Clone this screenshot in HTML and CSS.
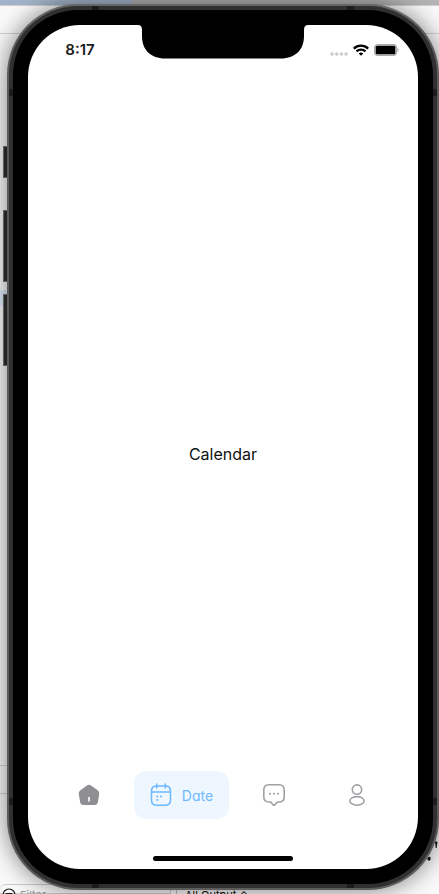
FILE: index.html
```
<!DOCTYPE html>
<html lang="en">
<head>
<meta charset="utf-8">
<meta name="viewport" content="width=device-width, initial-scale=1">
<title>Calendar</title>
<link rel="stylesheet" href="styles.css">
</head>
<body>
<div class="desktop">
  <div class="editor">
    <div class="editor-title"></div>
    <div class="editor-tabs"></div>
    <div class="editor-code"><div class="code-line"></div></div>
    <div class="editor-bar"></div>
    <div class="editor-console">
      <svg class="fragments" width="14" height="26" viewBox="0 0 14 26" aria-hidden="true"><path d="M10 2h2l-1 6M3 18l2-1v3H3z" fill="#111" stroke="#111"/></svg>
    </div>
    <div class="editor-footer">
      <div class="footer-filter">
        <svg width="14" height="14" viewBox="0 0 14 14" fill="none" stroke="#222" stroke-width="1.200" aria-hidden="true"><circle cx="7" cy="7" r="6"/><path d="M3.500 5.500h7M5 8.500h4"/></svg>
        <span>Filter</span>
      </div>
      <div class="footer-output">All Output ⌃</div>
    </div>
  </div>

  <div class="phone">
    <div class="side-buttons"><i class="mute"></i><i class="volume"></i><i class="volume"></i></div>
    <div class="frame">
      <div class="bezel">
        <div class="screen">
          <header class="status">
            <time class="clock">8:17</time>
            <svg class="notch" viewBox="0 0 170 34" aria-hidden="true"><path d="M0 0H170Q166 0 166 5V11C166 25 157 33.500 143 33.500H27C13 33.500 4 25 4 11V5Q4 0 0 0Z"/></svg>
            <div class="signals">
              <svg width="18" height="4" viewBox="0 0 18 4" fill="#c9c9c9" aria-hidden="true"><circle cx="2" cy="2" r="1.700"/><circle cx="6.700" cy="2" r="1.700"/><circle cx="11.400" cy="2" r="1.700"/><circle cx="16.100" cy="2" r="1.700"/></svg>
              <svg width="16" height="12" viewBox="0 0 16 12" fill="none" stroke="#000" stroke-width="2.200" aria-hidden="true"><path d="M.8 4.600C4.800.7 11.200.7 15.200 4.600M3.500 7.400C6 5 10 5 12.500 7.400"/><path d="M8 11.800 5.700 9.400Q8 7.600 10.300 9.400Z" fill="#000" stroke="none"/></svg>
              <svg width="25" height="12" viewBox="0 0 25 12" aria-hidden="true"><rect x=".7" y=".7" width="21.600" height="10.600" rx="3" fill="none" stroke="#aaa" stroke-width="1.400"/><rect x="1.700" y="1.700" width="19.600" height="8.600" rx="1.500"/><path d="M23.300 4v4q1.300-.6 1.300-2t-1.300-2" fill="#aaa"/></svg>
            </div>
          </header>
          <main class="content"><p>Calendar</p></main>
          <nav class="tabs" aria-label="Main">
            <a class="tab" href="#home" aria-label="Home">
              <svg width="22" height="22" viewBox="0 0 22 22" aria-hidden="true"><path d="M9 1.400Q11 .2 13 1.400L19.600 6.200Q21.600 7.700 21.200 10L19.900 18Q19.400 21 16.600 21H5.400Q2.600 21 2.100 18L.8 10Q.4 7.700 2.400 6.200Z" fill="#8e8e93"/><path d="M11 13.500V17" stroke="#fff" stroke-width="1.600" stroke-linecap="round"/></svg>
            </a>
            <a class="tab tab-active" href="#date" aria-current="page">
              <svg width="22" height="24" viewBox="0 0 22 24" fill="none" stroke="#6db9ff" stroke-width="1.500" stroke-linecap="round" aria-hidden="true"><path d="M6.700 1v4M15.300 1v4M1.500 9h19M6.500 3h9Q20.500 3 20.500 8v9Q20.500 22.300 15 22.300H7Q1.500 22.300 1.500 17V8Q1.500 3 6.500 3Z"/><path d="M7.200 13.500h.1M11 13.500h.1M7.200 17h.1" stroke-width="1.900"/></svg>
              <span>Date</span>
            </a>
            <a class="tab" href="#messages" aria-label="Messages">
              <svg width="24" height="24" viewBox="0 0 24 24" fill="none" stroke="#a0a0a5" stroke-width="1.600" stroke-linecap="round" stroke-linejoin="round" aria-hidden="true"><path d="M7 1.800H17Q22.200 1.800 22.200 7V14Q22.200 19 17 19H16Q15.200 19 14.600 19.700L13.100 21.600Q12 22.800 10.900 21.600L9.400 19.700Q8.900 19 8 19H7Q1.800 19 1.800 14V7Q1.800 1.800 7 1.800Z"/><path d="M8 10.700h.1M12 10.700h.1M16 10.700h.1" stroke-width="2"/></svg>
            </a>
            <a class="tab" href="#profile" aria-label="Profile">
              <svg width="24" height="24" viewBox="0 0 24 24" fill="none" stroke="#a0a0a5" stroke-width="1.600" aria-hidden="true"><circle cx="12" cy="6.600" r="4.700"/><ellipse cx="12" cy="17.900" rx="7.100" ry="4.300"/></svg>
            </a>
          </nav>
          <div class="home-indicator"></div>
        </div>
      </div>
    </div>
  </div>
</div>
</body>
</html>
```
FILE: styles.css
```
* { box-sizing: border-box; }

body {
  margin: 0;
  font-family: Inter, "Liberation Sans", sans-serif;
}

.desktop {
  display: grid;
  height: 100vh;
  overflow: hidden;
}

.editor,
.phone {
  grid-area: 1 / 1;
  min-width: 0;
  min-height: 0;
}

.editor {
  display: flex;
  flex-direction: column;
  background: #fafafa;
}

.editor-title {
  height: 6px;
  background: linear-gradient(90deg, #a3b4ca 30%, #b4b4b4 30%);
  border-bottom: 1px solid #d0d0d0;
}

.editor-tabs {
  height: 28px;
  border-bottom: 1px solid #d4d4d4;
}

.editor-code {
  flex: 1;
  padding-top: 256px;
}

.code-line {
  height: 16px;
  background: #e2eeff;
}

.editor-bar {
  height: 29px;
  border: solid #d4d4d4;
  border-width: 1px 0;
}

.editor-console {
  display: flex;
  justify-content: flex-end;
  align-items: flex-end;
  height: 90px;
  padding-bottom: 18px;
}

.editor-footer {
  display: flex;
  height: 10px;
  overflow: hidden;
  color: #111;
  font-size: 11px;
  line-height: 14px;
}

.footer-filter {
  display: flex;
  align-items: flex-start;
  gap: 4px;
  width: 171px;
  padding: 3px 0 0 2px;
  border: 1px solid #ccc;
  border-left: 0;
  border-radius: 6px 0 0 0;
}

.footer-filter span { color: #999; }

.footer-filter svg { flex: none; }

.footer-output {
  flex: 1;
  margin-left: 5px;
  padding: 4px 0 0 8px;
  border-left: 1px solid #bbb;
}

.phone {
  display: grid;
  grid-template-columns: 7px minmax(0, 1fr);
  padding: 4px 0;
}

.side-buttons {
  display: flex;
  flex-direction: column;
  gap: 12px;
  padding: 142px 0 0 3px;
}

.side-buttons i {
  background: #303030;
  border: 1px solid #777;
  border-right: 0;
}

.mute {
  height: 32px;
  margin-bottom: 20px;
}

.volume { height: 72px; }

.frame {
  display: flex;
  min-height: 0;
  padding: 4px;
  border: 2px solid #5c5c5c;
  border-top-color: #666;
  border-radius: 71px;
  background:
    linear-gradient(90deg, transparent 83px, #1c1c1c 83px 90px, transparent 90px calc(100% - 90px), #1c1c1c calc(100% - 90px) calc(100% - 83px), transparent 0),
    linear-gradient(transparent 83px, #1c1c1c 83px 90px, transparent 90px calc(100% - 90px), #1c1c1c calc(100% - 90px) calc(100% - 83px), transparent 0),
    #303030;
  box-shadow: 0 0 24px rgba(0, 0, 0, 0.5);
}

.bezel {
  display: flex;
  flex: 1;
  min-width: 0;
  padding: 15px;
  border-radius: 65px;
  background: #000;
}

.screen {
  display: flex;
  flex: 1;
  flex-direction: column;
  min-width: 0;
  overflow: hidden;
  border-radius: 52px;
  background: #fff;
}

.status {
  display: grid;
  grid-template-columns: 1fr 170px 1fr;
  height: 50px;
}

.clock {
  justify-self: center;
  padding: 15px 6px 0 0;
  color: #1c1c1e;
  font-size: 15px;
  font-weight: 600;
  line-height: 20px;
}

.notch {
  width: 170px;
  height: 34px;
}

.signals {
  display: flex;
  justify-content: flex-end;
  gap: 5px;
  height: 12px;
  margin: 19px 19px 0 0;
}

.signals svg { flex: none; }

.signals svg:first-child { margin-top: 8px; }

.content {
  display: grid;
  flex: 1;
  place-items: center;
  padding-top: 62px;
}

.content p {
  margin: 0;
  color: #111;
  font-size: 16px;
  line-height: 20px;
}

.tabs {
  display: flex;
  gap: 7px;
  padding: 0 23px;
}

.tab {
  display: flex;
  flex: 1;
  align-items: center;
  justify-content: center;
  height: 48px;
  border-radius: 12px;
  color: #6db9ff;
  text-decoration: none;
}

.tab-active {
  flex: none;
  gap: 10px;
  width: 95px;
  background: #eef7ff;
  font-size: 14px;
  font-feature-settings: "cv11";
}

.home-indicator {
  align-self: center;
  width: 36%;
  height: 5px;
  margin: 37px 0 8px;
  border-radius: 3px;
  background: #000;
}
```
